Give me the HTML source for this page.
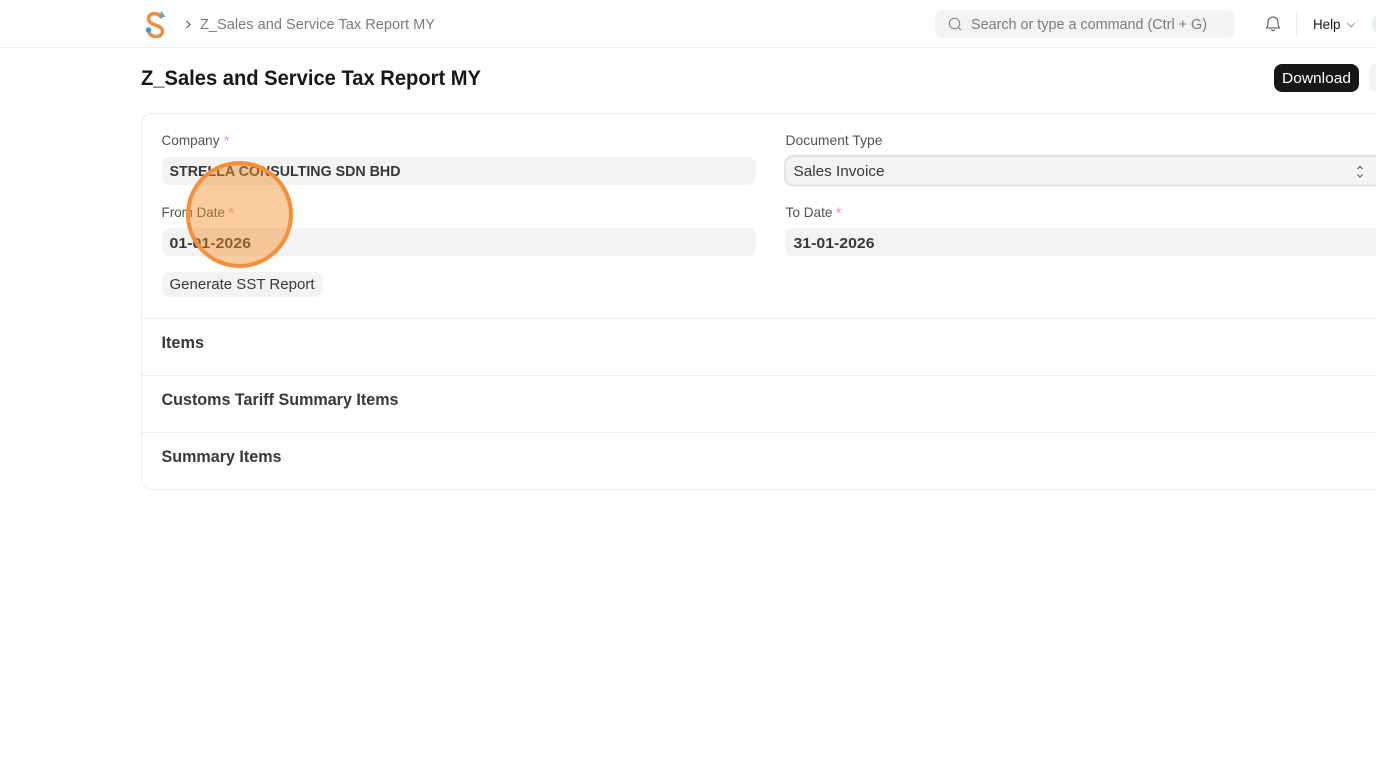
<!DOCTYPE html>
<html lang="en">
<head>
<meta charset="utf-8">
<title>Z_Sales and Service Tax Report MY</title>
<style>
html,body{margin:0;padding:0;background:#fff;width:1376px;height:769px;overflow:hidden}
svg{display:block;position:absolute;left:0;top:0}
text{font-family:"Liberation Sans",sans-serif;white-space:pre}
.lb{font-size:14px;fill:#525252}
.st{fill:#e8a29c;font-size:16px}
.v{font-size:15px;font-weight:bold;fill:#383838}
.h{font-size:16.5px;font-weight:bold;fill:#383838}
</style>
</head>
<body>
<svg width="1376" height="769" viewBox="0 0 1376 769" xmlns="http://www.w3.org/2000/svg">
  <!-- navbar -->
  <rect x="0" y="47" width="1376" height="1" fill="#ededed"/>
  <!-- logo -->
  <path d="M161 17 C158.500 12.500 151 12.500 149 16.500 C147 21 151 23.500 155.500 25 C160.500 26.800 164 29.500 162 33.500 C159.500 37.800 152.500 37.500 149.500 33.500" fill="none" stroke="#e5934a" stroke-width="3.600" stroke-linecap="round"/>
  <path d="M161.500 11 L165.500 17 L158.500 17 Z" fill="#6ba3cc"/>
  <circle cx="148.500" cy="30" r="2.800" fill="#4f94c8"/>
  <path d="M186.500 21 L190 24.500 L186.500 28" fill="none" stroke="#555" stroke-width="1.100"/>
  <text x="200" y="29" font-size="15" fill="#7c7c7c" textLength="235" lengthAdjust="spacingAndGlyphs">Z_Sales and Service Tax Report MY</text>
  <!-- search -->
  <rect x="935" y="10" width="300" height="28" rx="8" fill="#f3f3f3"/>
  <circle cx="954.500" cy="23.500" r="5.200" fill="none" stroke="#7c7c7c" stroke-width="1"/>
  <path d="M958.300 27.300 L961 30" stroke="#7c7c7c" stroke-width="1"/>
  <text x="971" y="29" font-size="15" fill="#7c7c7c" textLength="236" lengthAdjust="spacingAndGlyphs">Search or type a command (Ctrl + G)</text>
  <!-- bell -->
  <path d="M1266.500 28 L1267.400 26.600 C1268 25.500 1268 24 1268 22.500 C1268 19.500 1270 17 1273 17 C1276 17 1278 19.500 1278 22.500 C1278 24 1278 25.500 1278.600 26.600 L1279.500 28 Z" fill="none" stroke="#4a4a4a" stroke-width="1" stroke-linejoin="round"/>
  <path d="M1271.500 29.500 C1272 31.200 1274 31.200 1274.500 29.500" fill="none" stroke="#4a4a4a" stroke-width="1"/>
  <rect x="1296" y="12" width="1" height="24" fill="#ececec"/>
  <text x="1313" y="29" font-size="14" fill="#171717" textLength="27.500" lengthAdjust="spacingAndGlyphs">Help</text>
  <path d="M1347 23 L1351 27 L1355 23" fill="none" stroke="#999" stroke-width="1"/>
  <circle cx="1384" cy="24" r="12" fill="#e3f3e6"/>
  <!-- title -->
  <text x="141" y="85" font-size="21" font-weight="bold" fill="#171717" textLength="340" lengthAdjust="spacingAndGlyphs">Z_Sales and Service Tax Report MY</text>
  <rect x="1274" y="64" width="85" height="28" rx="8" fill="#171717"/>
  <text x="1282" y="83" font-size="15" fill="#fff" textLength="69" lengthAdjust="spacingAndGlyphs">Download</text>
  <rect x="1369" y="64" width="30" height="28" rx="8" fill="#f3f3f3"/>
  <!-- card -->
  <rect x="141.500" y="113.500" width="1300" height="376" rx="10" fill="#fff" stroke="#ededed"/>
  <!-- fields -->
  <text x="161.500" y="145" class="lb" textLength="58" lengthAdjust="spacingAndGlyphs">Company</text>
  <text x="223.500" y="146.500" class="st">*</text>
  <rect x="162" y="157" width="594" height="28" rx="8" fill="#f3f3f3"/>
  <text x="169.500" y="176" class="v" textLength="231" lengthAdjust="spacingAndGlyphs">STRELLA CONSULTING SDN BHD</text>

  <text x="785.500" y="145" class="lb" textLength="97" lengthAdjust="spacingAndGlyphs">Document Type</text>
  <rect x="785" y="156" width="610" height="29.500" rx="8" fill="#f3f3f3" stroke="#dcdcdc" stroke-width="1.500"/>
  <text x="793.500" y="176" font-size="15" fill="#383838" textLength="91" lengthAdjust="spacingAndGlyphs">Sales Invoice</text>
  <path d="M1357.500 169 L1360 166.500 L1362.500 169 M1357.500 174.500 L1360 177 L1362.500 174.500" fill="none" stroke="#555" stroke-width="1.100"/>

  <text x="161.500" y="217" class="lb" textLength="63.500" lengthAdjust="spacingAndGlyphs">From Date</text>
  <text x="228" y="218.500" class="st">*</text>
  <rect x="162" y="228" width="594" height="28" rx="8" fill="#f3f3f3"/>
  <text x="169.500" y="248" class="v" textLength="81.500" lengthAdjust="spacingAndGlyphs">01-01-2026</text>

  <text x="785.500" y="217" class="lb" textLength="47" lengthAdjust="spacingAndGlyphs">To Date</text>
  <text x="835.500" y="218.500" class="st">*</text>
  <rect x="785" y="228" width="610" height="28" rx="8" fill="#f3f3f3"/>
  <text x="793.500" y="248" class="v" textLength="81" lengthAdjust="spacingAndGlyphs">31-01-2026</text>

  <rect x="162" y="272" width="161" height="25" rx="8" fill="#f3f3f3"/>
  <text x="169.500" y="289" font-size="15" fill="#383838" textLength="145" lengthAdjust="spacingAndGlyphs">Generate SST Report</text>

  <!-- sections -->
  <rect x="142" y="318" width="1234" height="1" fill="#ededed"/>
  <text x="161.500" y="348" class="h" textLength="42.500" lengthAdjust="spacingAndGlyphs">Items</text>
  <rect x="142" y="375" width="1234" height="1" fill="#ededed"/>
  <text x="161.500" y="405" class="h" textLength="237" lengthAdjust="spacingAndGlyphs">Customs Tariff Summary Items</text>
  <rect x="142" y="432" width="1234" height="1" fill="#ededed"/>
  <text x="161.500" y="462" class="h" textLength="120" lengthAdjust="spacingAndGlyphs">Summary Items</text>

  <!-- click highlight -->
  <circle cx="239.500" cy="214.500" r="51.500" fill="#f98e2f" fill-opacity="0.45" stroke="#f78f35" stroke-width="4"/>
</svg>
</body>
</html>
